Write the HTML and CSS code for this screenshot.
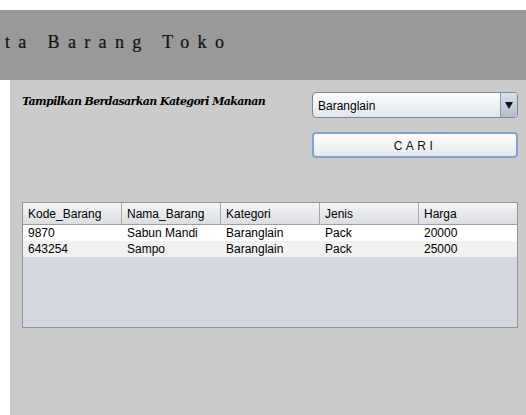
FILE: index.html
```html
<!DOCTYPE html>
<html>
<head>
<meta charset="utf-8">
<link rel="stylesheet" href="styles.css">
</head>
<body>
<div class="top"></div>
<header class="banner"><h1 class="title">ta Barang Toko</h1></header>
<div class="main">
  <div class="gutter"></div>
  <section class="panel">
    <div class="controls">
      <div class="label">Tampilkan Berdasarkan Kategori Makanan</div>
      <div class="actions">
        <div class="combo">
          <span class="combo-text">Baranglain</span>
          <span class="combo-btn"><svg width="8" height="7" viewBox="0 0 8 7"><path d="M0 0H8L4 7Z" fill="#111"/></svg></span>
        </div>
        <button class="cari">CARI</button>
      </div>
    </div>
    <div class="table">
      <div class="thead">
        <div class="th">Kode_Barang</div>
        <div class="th">Nama_Barang</div>
        <div class="th">Kategori</div>
        <div class="th">Jenis</div>
        <div class="th">Harga</div>
      </div>
      <div class="tr">
        <div class="td">9870</div><div class="td">Sabun Mandi</div><div class="td">Baranglain</div><div class="td">Pack</div><div class="td">20000</div>
      </div>
      <div class="tr alt">
        <div class="td">643254</div><div class="td">Sampo</div><div class="td">Baranglain</div><div class="td">Pack</div><div class="td">25000</div>
      </div>
    </div>
  </section>
</div>
</body>
</html>
```
FILE: styles.css
```css
html, body { margin: 0; padding: 0; background: #fff; }
body { width: 526px; height: 415px; overflow: hidden; font-family: "Liberation Sans", Arial, sans-serif; }
.top { height: 10px; background: #fff; }
.banner { height: 70px; background: #999999; display: flex; align-items: center; }
.title {
  margin: 0 0 5px 5px;
  font-family: "Liberation Serif", "Times New Roman", serif;
  font-weight: normal;
  font-size: 18px;
  letter-spacing: 8.35px;
  color: #111;
  -webkit-text-stroke: 0.2px #111;
}
.main { display: flex; height: 335px; }
.gutter { width: 10px; background: #fff; }
.panel { flex: 1; background: #cbcbcb; padding: 0 8px 0 12px; }
.controls { display: flex; justify-content: space-between; }
.label {
  margin-top: 15px;
  font-family: "DejaVu Serif", serif;
  font-style: italic;
  font-weight: bold;
  font-size: 11px;
  letter-spacing: -0.6px;
  color: #000;
}
.actions { width: 206px; margin-top: 12px; display: flex; flex-direction: column; gap: 14px; }
.combo {
  height: 26px;
  box-sizing: border-box;
  border: 1px solid #7d8894;
  border-radius: 4px;
  background: linear-gradient(#fbfcfd, #e1e6ec);
  display: flex;
  align-items: center;
  overflow: hidden;
}
.combo-text { flex: 1; padding: 2px 0 0 5px; font-size: 12px; color: #000; }
.combo-btn {
  width: 16px; height: 100%;
  border-left: 1px solid #8d9aa8;
  background: linear-gradient(#d9e2ec, #aebdcd);
  display: flex; align-items: center; justify-content: center;
}
.cari {
  height: 26px;
  box-sizing: border-box;
  border: 2px solid #7fa4cf;
  border-radius: 4px;
  background: linear-gradient(#ffffff, #e6e8eb);
  font-family: "Liberation Sans", Arial, sans-serif;
  font-size: 12px;
  letter-spacing: 3.5px;
  color: #111;
  padding: 2px 0 0 0;
}
.table {
  margin-top: 44px;
  width: 496px;
  height: 126px;
  box-sizing: border-box;
  border: 1px solid #8f959d;
  background: #d5d8e0;
  font-size: 12px;
  color: #000;
}
.thead {
  display: grid;
  grid-template-columns: 99px 99px 99px 99px 1fr;
  height: 22px;
  box-sizing: border-box;
  border-bottom: 1px solid #9aa0a8;
  background: linear-gradient(#f4f5f7, #dcdde1);
}
.th { border-right: 1px solid #a5a8ae; padding: 4px 0 0 5px; line-height: 14px; }
.th:last-child { border-right: none; }
.tr { display: grid; grid-template-columns: 99px 99px 99px 99px 1fr; height: 16px; background: #fff; }
.tr.alt { background: #f1f1f1; }
.td { padding-left: 5px; line-height: 16px; }
```
